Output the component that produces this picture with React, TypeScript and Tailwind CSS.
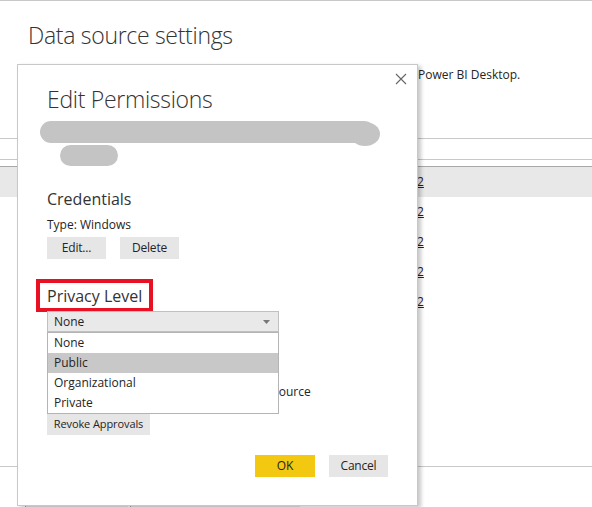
import React from "react";

function Btn({ children, w, yellow, small }: { children: React.ReactNode; w: string; yellow?: boolean; small?: boolean }) {
  return (
    <div
      className={`${w} h-[22px] flex items-center justify-center ${small ? "text-[11px] tracking-[-0.1px]" : "text-[12px] tracking-[-0.2px]"} text-[#252423] whitespace-nowrap ${
        yellow ? "bg-[#f2c811]" : "bg-[#e6e6e6]"
      }`}
    >
      {children}
    </div>
  );
}

export default function App() {
  return (
    <div className="relative w-[592px] h-[507px] overflow-hidden bg-white border-t border-[#c8c8c8] font-['Open_Sans','Noto_Sans',sans-serif] text-[#252423]">
      {/* Background page */}
      <h1 className="pt-[18px] pl-[28px] text-[23px] leading-[32px] tracking-[-0.3px] font-light text-[#333]">
        Data source settings
      </h1>
      <div className="mt-[16px] pl-[418px] text-[12px] leading-[16px] whitespace-nowrap">Power BI Desktop.</div>
      <div className="mt-[55px] border-t border-[#c8c8c8] h-[21px]" />
      <div className="border-t border-[#c8c8c8] h-[7px]" />
      <div className="border-t border-[#a8a8a8] h-[301px] border-b border-b-[#c8c8c8]">
        {[0, 1, 2, 3, 4].map((i) => (
          <div
            key={i}
            className={`h-[30px] pl-[417px] flex items-center text-[12px] whitespace-nowrap ${i === 0 ? "bg-[#e8e8e8]" : ""}`}
          >
            <span className="underline">2</span>
          </div>
        ))}
      </div>
      <div className="mt-[36px] pl-[25px] flex gap-[2px]">
        <div className="w-[103px] h-[20px] bg-[#e6e6e6] border-l border-[#a0a0a0]" />
        <div className="w-[170px] h-[20px] bg-[#e6e6e6] border-l border-[#a0a0a0]" />
      </div>

      {/* Edit Permissions dialog */}
      <div className="absolute left-[17px] top-[63px] w-[401px] h-[442px] bg-white border border-[#c8c8c8] shadow-[3px_2px_4px_rgba(0,0,0,0.22)] pl-[29px] pr-[29px]">
        <svg className="absolute right-[10px] top-[8px]" width="12" height="12" viewBox="0 0 12 12">
          <path d="M1 1L11 11M11 1L1 11" stroke="#666" strokeWidth="1.1" />
        </svg>
        <h2 className="pt-[18px] text-[23px] leading-[32px] tracking-[-0.3px] font-light text-[#333]">Edit Permissions</h2>
        <svg className="mt-[5px] ml-[-7px] block" width="345" height="47" viewBox="0 0 345 47">
          <rect x="0" y="1" width="335" height="22" rx="11" fill="#c4c4c4" />
          <ellipse cx="325" cy="14" rx="15" ry="12" fill="#c4c4c4" />
          <rect x="20" y="25" width="58" height="21" rx="10.5" fill="#c4c4c4" />
        </svg>
        <h3 className="mt-[20px] text-[16px] leading-[24px] text-[#333]">Credentials</h3>
        <p className="mt-[6px] text-[12px] leading-[16px]">Type: Windows</p>
        <div className="mt-[4px] flex gap-[14px]">
          <Btn w="w-[59px]">Edit...</Btn>
          <Btn w="w-[59px]">Delete</Btn>
        </div>
        <div className="mt-[20px] ml-[-11px] w-[117px] h-[33px] border-4 border-[#e81123] pl-[7px] flex items-center">
          <span className="text-[16px] leading-[24px] text-[#333]">Privacy Level</span>
        </div>
        <div className="relative mt-[-1px] w-[232px]">
          <div className="h-[21px] bg-[#e9e9e9] border border-[#c0c0c0] flex items-center justify-between pl-[6px] pr-[8px] text-[12px]">
            <span>None</span>
            <svg width="7" height="4" viewBox="0 0 7 4">
              <path d="M0 0H7L3.5 4Z" fill="#777" />
            </svg>
          </div>
          <div className="absolute z-10 left-0 top-[21px] w-[232px] bg-white border border-[#b4b4b4] text-[12px]">
            {["None", "Public", "Organizational", "Private"].map((o) => (
              <div
                key={o}
                className={`h-[20px] pl-[6px] flex items-center ${o === "Public" ? "bg-[#c8c8c8]" : ""}`}
              >
                {o}
              </div>
            ))}
          </div>
        </div>
        <div className="mt-[52px] pl-[226px] text-[12px] leading-[16px] whitespace-nowrap">source</div>
        <div className="mt-[13px]">
          <Btn w="w-[103px]" small>
            Revoke Approvals
          </Btn>
        </div>
        <div className="mt-[20px] flex justify-end gap-[14px]">
          <Btn w="w-[60px]" yellow>
            OK
          </Btn>
          <Btn w="w-[59px]">Cancel</Btn>
        </div>
      </div>
    </div>
  );
}
